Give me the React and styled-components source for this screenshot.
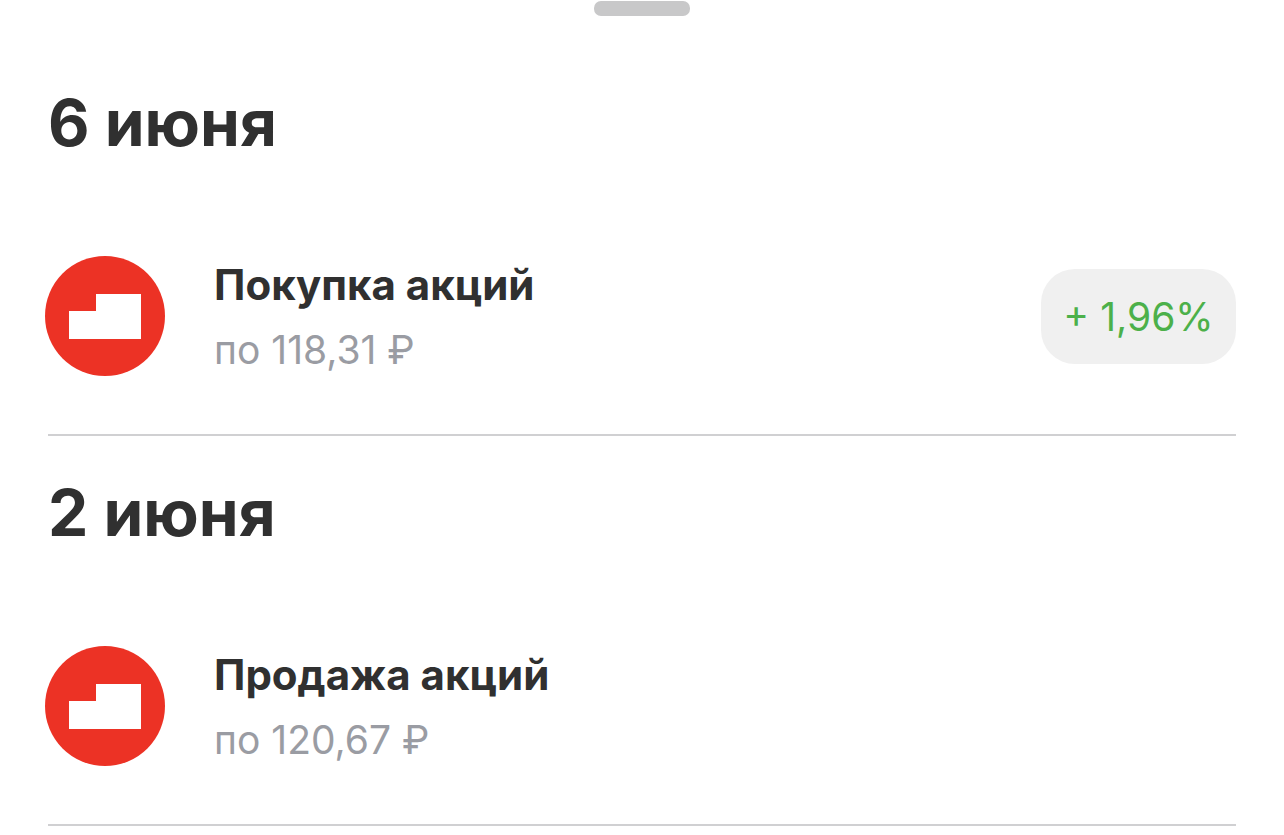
import styled, { createGlobalStyle } from "styled-components";

const GlobalStyle = createGlobalStyle`
  html, body {
    margin: 0;
    background: #fff;
    font-family: "Inter", "Liberation Sans", sans-serif;
  }
`;

const Sheet = styled.div`
  width: 1284px;
  height: 835px;
  overflow: hidden;
  background: #fff;
  box-sizing: border-box;
`;

const HandleWrap = styled.div`
  display: flex;
  justify-content: center;
  padding-top: 1px;
  height: 46px;
  box-sizing: border-box;
`;

const Handle = styled.div`
  width: 96px;
  height: 15px;
  border-radius: 7px;
  background: #c8c8c9;
`;

const Section = styled.section`
  margin: 0 48px;
  height: 390px;
  box-sizing: border-box;
  border-bottom: 2px solid #d0d0d2;
`;

const DateTitle = styled.h2`
  margin: 0;
  padding-top: 33px;
  height: 210px;
  box-sizing: border-box;
  font-size: 64px;
  line-height: 88px;
  font-weight: 700;
  color: #303030;
`;

const Row = styled.div`
  display: flex;
  align-items: center;
  margin-left: -3px;
  height: 120px;
`;

const Logo = styled.svg`
  flex: none;
  width: 120px;
  height: 120px;
`;

const Info = styled.div`
  flex: 1;
  padding: 2px 0 0 49px;
`;

const Title = styled.div`
  font-size: 42px;
  line-height: 48px;
  font-weight: 700;
  color: #303030;
`;

const Price = styled.div`
  margin-top: 18px;
  font-size: 39px;
  line-height: 46px;
  font-weight: 400;
  color: #9a9ca3;
`;

const Badge = styled.div`
  width: 195px;
  height: 95px;
  border-radius: 34px;
  background: #f0f0f0;
  color: #4cb04a;
  font-size: 39px;
  font-weight: 400;
  display: flex;
  align-items: center;
  justify-content: center;
`;

const BrandMark = () => (
  <Logo viewBox="0 0 120 120">
    <circle cx="60" cy="60" r="60" fill="#ec3225" />
    <path d="M24 55h27V38h45v45H24z" fill="#fff" />
  </Logo>
);

const items = [
  { date: "6 июня", title: "Покупка акций", price: "по 118,31 ₽", change: "+ 1,96%" },
  { date: "2 июня", title: "Продажа акций", price: "по 120,67 ₽" },
];

export default function App() {
  return (
    <Sheet>
      <GlobalStyle />
      <HandleWrap>
        <Handle />
      </HandleWrap>
      {items.map((item) => (
        <Section key={item.date}>
          <DateTitle>{item.date}</DateTitle>
          <Row>
            <BrandMark />
            <Info>
              <Title>{item.title}</Title>
              <Price>{item.price}</Price>
            </Info>
            {item.change && <Badge>{item.change}</Badge>}
          </Row>
        </Section>
      ))}
    </Sheet>
  );
}
